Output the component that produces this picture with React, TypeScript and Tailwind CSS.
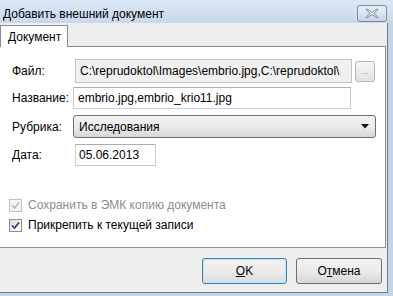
import React from "react";

const font = { fontFamily: '"Liberation Sans", Arial, sans-serif' };

function Check({ disabled }: { disabled?: boolean }) {
  return (
    <div
      className={
        "w-[13px] h-[13px] border flex items-center justify-center " +
        (disabled
          ? "border-[#c0c0c0] bg-[#f4f4f4]"
          : "border-[#8e8f8f] bg-gradient-to-br from-[#dcdcdc] to-white")
      }
    >
      <svg width="9" height="9" viewBox="0 0 9 9">
        <path
          d="M1 4.5 L3.5 7 L8 1.5"
          fill="none"
          stroke={disabled ? "#b8b8b8" : "#27388a"}
          strokeWidth="1.7"
        />
      </svg>
    </div>
  );
}

export default function App() {
  return (
    <div
      className="w-[393px] h-[296px] flex flex-col bg-[#c4d4e7] text-[12px] text-black overflow-hidden"
      style={font}
    >
      {/* Title bar */}
      <div className="h-[23px] shrink-0 flex items-center justify-between pl-[3px] pr-[6px] bg-gradient-to-b from-[#dbe7f4] to-[#c8d8eb]">
        <span className="text-[12px] text-black mt-[5px]">Добавить внешний документ</span>
        <div className="mt-[4px] w-[30px] h-[17px] rounded-[3px] border border-[#7d8ca1] bg-gradient-to-b from-[#e9eff7] to-[#cad7e8] flex items-center justify-center">
          <svg width="14" height="11" viewBox="0 0 14 11">
            <path
              d="M2 1 L7 4.5 L12 1 L13 2 L8.5 5.5 L13 9 L12 10 L7 6.5 L2 10 L1 9 L5.5 5.5 L1 2 Z"
              fill="#ffffff"
              stroke="#5d6b80"
              strokeWidth="0.8"
            />
          </svg>
        </div>
      </div>

      {/* Client area */}
      <div className="flex-1 flex flex-col bg-[#eeeeee] mr-[5px] mb-[3px] border-r border-b border-[#6e7a8c]">
        {/* Tab strip */}
        <div className="h-[22px] shrink-0 flex items-end mt-[1px]">
          <div className="h-[22px] w-[68px] bg-white border border-b-0 border-[#898c95] flex items-center pl-[7px] relative z-10 -mb-px">
            Документ
          </div>
        </div>

        {/* Panel */}
        <div className="h-[202px] shrink-0 bg-white border border-[#898c95] -ml-px mr-[1px] flex flex-col">
          <div className="flex items-center mt-[12px] h-[24px]">
            <span className="w-[75px] pl-[12px] shrink-0">Файл:</span>
            <div className="w-[277px] h-[24px] border border-[#bfc3c9] bg-[#f0f0f0] flex items-center pl-[4px] overflow-hidden whitespace-nowrap">
              C:\reprudoktol\Images\embrio.jpg,C:\reprudoktol\
            </div>
            <div className="ml-[3px] w-[20px] h-[21px] rounded-[3px] border border-[#b5b5b5] bg-gradient-to-b from-[#f6f6f6] to-[#e2e2e2] flex items-end justify-center pb-[5px] text-[8px] text-[#8a8a8a] leading-none">
              ...
            </div>
          </div>

          <div className="flex items-center mt-[4px] h-[22px]">
            <span className="w-[73px] pl-[12px] shrink-0">Название:</span>
            <div className="w-[278px] h-[22px] border border-[#c8ccd2] border-t-[#abadb3] bg-white flex items-center pl-[4px] whitespace-nowrap">
              embrio.jpg,embrio_krio11.jpg
            </div>
          </div>

          <div className="flex items-center mt-[6px] h-[23px]">
            <span className="w-[73px] pl-[12px] shrink-0">Рубрика:</span>
            <div className="w-[303px] h-[23px] rounded-[3px] border border-[#707070] bg-gradient-to-b from-[#f3f3f3] via-[#ebebeb] to-[#d8d8d8] flex items-center justify-between pl-[5px] pr-[6px]">
              <span>Исследования</span>
              <svg width="8" height="5" viewBox="0 0 8 5">
                <path d="M0 0 H8 L4 4.5 Z" fill="#111111" />
              </svg>
            </div>
          </div>

          <div className="flex items-center mt-[6px] h-[22px]">
            <span className="w-[75px] pl-[12px] shrink-0">Дата:</span>
            <div className="w-[81px] h-[22px] border border-[#c8ccd2] border-t-[#abadb3] bg-white flex items-center pl-[3px]">
              05.06.2013
            </div>
          </div>

          <div className="flex items-center gap-[6px] pl-[9px] mt-[31px] h-[16px] text-[#8d8d8d]">
            <Check disabled />
            <span>Сохранить в ЭМК копию документа</span>
          </div>
          <div className="flex items-center gap-[6px] pl-[9px] mt-[4px] h-[16px]">
            <Check />
            <span>Прикрепить к текущей записи</span>
          </div>
        </div>

        {/* Buttons */}
        <div className="flex-1 flex items-start justify-end gap-[9px] pt-[10px] pr-[5px]">
          <div className="w-[85px] h-[26px] rounded-[3px] border border-[#3c7fb1] bg-gradient-to-b from-[#f2f2f2] via-[#ebebeb] to-[#d9dfe4] shadow-[inset_0_0_0_1px_#c4e3f7] flex items-center justify-center">
            <span>
              <span className="underline">O</span>K
            </span>
          </div>
          <div className="w-[86px] h-[26px] rounded-[3px] border border-[#707070] bg-gradient-to-b from-[#f2f2f2] via-[#ebebeb] to-[#d6d6d6] flex items-center justify-center">
            <span>
              О<span className="underline">т</span>мена
            </span>
          </div>
        </div>
      </div>
    </div>
  );
}
